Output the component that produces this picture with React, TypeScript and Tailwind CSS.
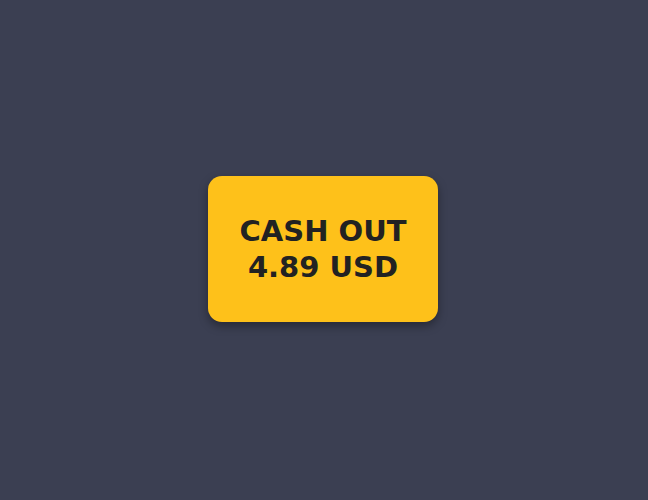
export default function App() {
  return (
    <div className="flex h-[500px] w-full items-center justify-center bg-[#3b3f52]">
      <button className="mr-[2px] mb-[2px] flex h-[146px] w-[230px] flex-col items-center justify-center rounded-[14px] bg-[#fec11a] font-['DejaVu_Sans',sans-serif] text-[29px] leading-[36px] font-bold text-[#222222] shadow-[0_4px_10px_rgba(0,0,0,0.35)]">
        <span>CASH OUT</span>
        <span>4.89 USD</span>
      </button>
    </div>
  );
}
